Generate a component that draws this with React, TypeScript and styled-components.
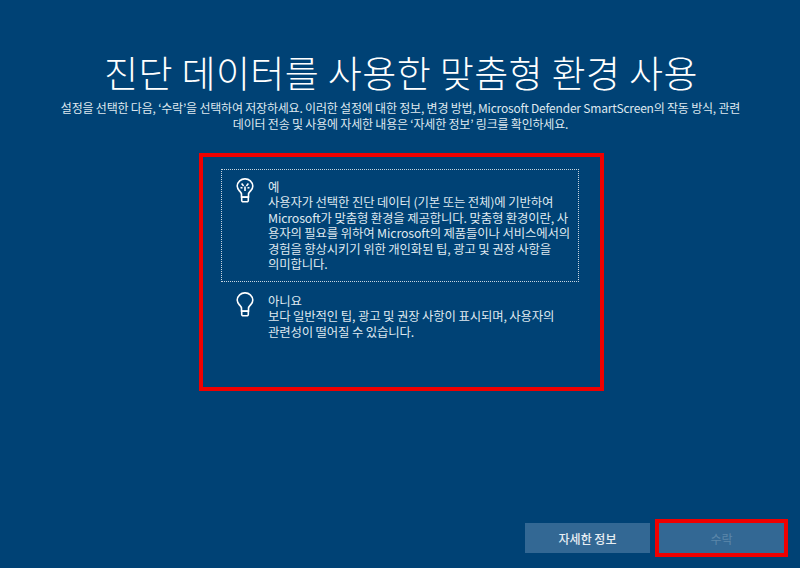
import * as React from 'react';
import styled, { createGlobalStyle } from 'styled-components';

const GlobalStyle = createGlobalStyle`
  html, body {
    margin: 0;
    padding: 0;
    background: #004275;
  }
  body {
    font-family: 'Noto Sans CJK KR', 'Open Sans', sans-serif;
  }
`;

const Page = styled.div`
  width: 800px;
  height: 568px;
  background: #004275;
  color: #fff;
  display: flex;
  flex-direction: column;
  align-items: center;
  overflow: hidden;
`;

const Title = styled.h1`
  margin: 47px 0 0 2px;
  height: 50px;
  font-size: 37px;
  line-height: 50px;
  font-weight: 300;
  letter-spacing: 0.4px;
  color: #fff;
  white-space: nowrap;
`;

const Subtitle = styled.p`
  margin: 3px 0 0 1px;
  width: 720px;
  font-size: 12px;
  line-height: 16px;
  letter-spacing: -0.2px;
  text-align: center;
  color: #dfe8ef;
`;

const Highlight = styled.div`
  box-sizing: border-box;
  margin: 21px 0 0 3px;
  width: 405px;
  height: 238px;
  border: 4px solid #f00000;
  padding: 12px 21px 0 18px;
`;

const Option = styled.div<{ $focused?: boolean }>`
  box-sizing: border-box;
  display: flex;
  width: 358px;
  height: ${(p) => (p.$focused ? '113px' : 'auto')};
  margin-top: ${(p) => (p.$focused ? '0' : '1px')};
  padding: 8px 8px 0 12px;
  border: 1px dotted ${(p) => (p.$focused ? '#c9d6e0' : 'transparent')};
`;

const IconSlot = styled.div`
  flex: 0 0 34px;
  height: 26px;
  color: #fff;
`;

const OptionText = styled.div`
  flex: 1;
  padding-top: 2px;
  font-size: 12.4px;
  line-height: 15.4px;
  letter-spacing: -0.15px;
  white-space: nowrap;
  color: #dfe8ef;
`;

const Footer = styled.div`
  margin-top: auto;
  align-self: flex-end;
  display: flex;
  align-items: center;
  gap: 5px;
  padding: 0 12px 11px 0;
`;

const Button = styled.button<{ $disabled?: boolean }>`
  box-sizing: border-box;
  width: 125px;
  height: 30px;
  padding: 0;
  border: 0;
  background: #336894;
  font-family: inherit;
  font-size: 12px;
  font-weight: ${(p) => (p.$disabled ? 400 : 500)};
  color: ${(p) => (p.$disabled ? '#5c87aa' : '#e8eef3')};
`;

const ButtonOutline = styled.div`
  box-sizing: border-box;
  display: flex;
  align-items: center;
  justify-content: center;
  width: 133px;
  height: 38px;
  border: 4px solid #f00000;
`;

const BulbOn = () => (
  <svg width="22" height="26" viewBox="0 0 22 26" fill="none" stroke="currentColor" strokeWidth="1.6">
    <path d="M7.5 19v-2.6c0-1.6-1-2.4-2.3-3.8A7.6 7.6 0 0 1 3.2 8 7.6 7.6 0 0 1 11 .9 7.6 7.6 0 0 1 18.8 8c0 1.8-.8 3.4-2 4.6-1.3 1.4-2.3 2.2-2.3 3.8V19z" />
    <path d="M7.7 19.2h6.6v3.2a1.4 1.4 0 0 1-1.4 1.4H9.1a1.4 1.4 0 0 1-1.4-1.4z" />
    <path d="M11 8.5V13M7.6 5.6l2 2.4M14.4 5.6l-2 2.4M6.5 9.5l2 .5M15.5 9.5l-2 .5" />
  </svg>
);

const BulbOff = () => (
  <svg width="22" height="26" viewBox="0 0 22 26" fill="none" stroke="currentColor" strokeWidth="1.6">
    <path d="M7.5 19v-2.6c0-1.6-1-2.4-2.3-3.8A7.6 7.6 0 0 1 3.2 8 7.6 7.6 0 0 1 11 .9 7.6 7.6 0 0 1 18.8 8c0 1.8-.8 3.4-2 4.6-1.3 1.4-2.3 2.2-2.3 3.8V19z" />
    <path d="M7.7 19.2h6.6v3.2a1.4 1.4 0 0 1-1.4 1.4H9.1a1.4 1.4 0 0 1-1.4-1.4z" />
  </svg>
);

const App = () => (
  <Page>
    <GlobalStyle />
    <Title>진단 데이터를 사용한 맞춤형 환경 사용</Title>
    <Subtitle>
      설정을 선택한 다음, ‘수락’을 선택하여 저장하세요. 이러한 설정에 대한 정보, 변경 방법, Microsoft Defender SmartScreen의 작동 방식, 관련
      <br />
      데이터 전송 및 사용에 자세한 내용은 ‘자세한 정보’ 링크를 확인하세요.
    </Subtitle>
    <Highlight>
      <Option $focused>
        <IconSlot>
          <BulbOn />
        </IconSlot>
        <OptionText>
          예
          <br />
          사용자가 선택한 진단 데이터 (기본 또는 전체)에 기반하여
          <br />
          Microsoft가 맞춤형 환경을 제공합니다. 맞춤형 환경이란, 사
          <br />
          용자의 필요를 위하여 Microsoft의 제품들이나 서비스에서의
          <br />
          경험을 향상시키기 위한 개인화된 팁, 광고 및 권장 사항을
          <br />
          의미합니다.
        </OptionText>
      </Option>
      <Option>
        <IconSlot>
          <BulbOff />
        </IconSlot>
        <OptionText>
          아니요
          <br />
          보다 일반적인 팁, 광고 및 권장 사항이 표시되며, 사용자의
          <br />
          관련성이 떨어질 수 있습니다.
        </OptionText>
      </Option>
    </Highlight>
    <Footer>
      <Button>자세한 정보</Button>
      <ButtonOutline>
        <Button $disabled>수락</Button>
      </ButtonOutline>
    </Footer>
  </Page>
);

export default App;
